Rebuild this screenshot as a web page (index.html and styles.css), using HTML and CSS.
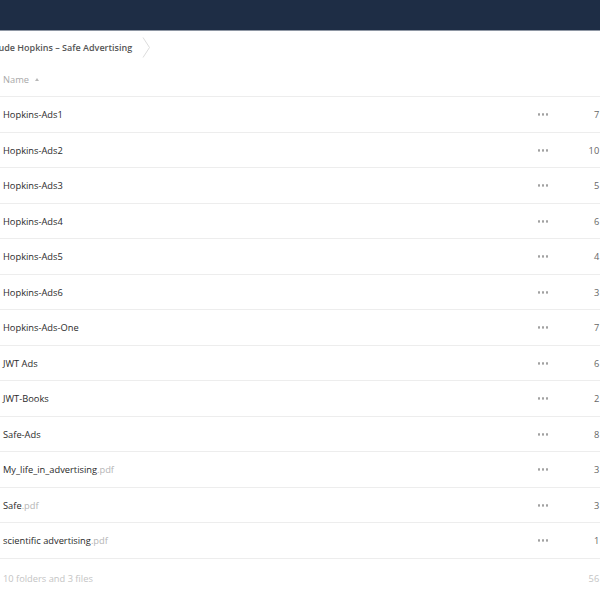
FILE: index.html
```html
<!DOCTYPE html>
<html>
<head>
<meta charset="utf-8">
<link rel="stylesheet" href="styles.css">
</head>
<body>
<header class="topbar"></header>
<div class="crumbs">
  <span class="crumb">Claude Hopkins – Safe Advertising</span>
  <svg class="chev" width="9" height="21" viewBox="0 0 9 21"><path d="M1 0.5 L7.5 10.5 L1 20.5" fill="none" stroke="#dcdcdc" stroke-width="1"/></svg>
</div>
<div class="list">
  <div class="thead"><span class="th-name">Name</span><span class="sort"></span></div>
  <div class="row"><span class="name">Hopkins-Ads1</span><span class="acts"><i></i><i></i><i></i></span><span class="size">7 MB</span></div>
  <div class="row"><span class="name">Hopkins-Ads2</span><span class="acts"><i></i><i></i><i></i></span><span class="size">10 MB</span></div>
  <div class="row"><span class="name">Hopkins-Ads3</span><span class="acts"><i></i><i></i><i></i></span><span class="size">5 MB</span></div>
  <div class="row"><span class="name">Hopkins-Ads4</span><span class="acts"><i></i><i></i><i></i></span><span class="size">6 MB</span></div>
  <div class="row"><span class="name">Hopkins-Ads5</span><span class="acts"><i></i><i></i><i></i></span><span class="size">4 MB</span></div>
  <div class="row"><span class="name">Hopkins-Ads6</span><span class="acts"><i></i><i></i><i></i></span><span class="size">3 MB</span></div>
  <div class="row"><span class="name">Hopkins-Ads-One</span><span class="acts"><i></i><i></i><i></i></span><span class="size">7 MB</span></div>
  <div class="row"><span class="name">JWT Ads</span><span class="acts"><i></i><i></i><i></i></span><span class="size">6 MB</span></div>
  <div class="row"><span class="name">JWT-Books</span><span class="acts"><i></i><i></i><i></i></span><span class="size">2 MB</span></div>
  <div class="row"><span class="name">Safe-Ads</span><span class="acts"><i></i><i></i><i></i></span><span class="size">8 MB</span></div>
  <div class="row"><span class="name">My_life_in_advertising<span class="ext">.pdf</span></span><span class="acts"><i></i><i></i><i></i></span><span class="size">3 MB</span></div>
  <div class="row"><span class="name">Safe<span class="ext">.pdf</span></span><span class="acts"><i></i><i></i><i></i></span><span class="size">3 MB</span></div>
  <div class="row"><span class="name">scientific advertising<span class="ext">.pdf</span></span><span class="acts"><i></i><i></i><i></i></span><span class="size">1 MB</span></div>
  <div class="summary"><span class="name">10 folders and 3 files</span><span class="size">56 MB</span></div>
</div>
</body>
</html>
```
FILE: styles.css
```css
html, body {
  margin: 0;
  padding: 0;
  overflow: hidden;
  background: #fff;
  font-family: "Open Sans", "Noto Sans", sans-serif;
  font-size: 9.3px;
}
.topbar {
  height: 31px;
  background: #1e2d45;
  border-bottom: 1px solid #8e96a3;
  box-sizing: border-box;
}
.crumbs {
  height: 32px;
  display: flex;
  align-items: center;
  gap: 10px;
}
.crumb {
  font-size: 9px;
  font-weight: 600;
  color: #555;
  margin-left: -15px;
  white-space: nowrap;
}
.chev { display: block; }
.list {
  width: 640px;
}
.thead {
  height: 34px;
  display: flex;
  align-items: center;
  padding-left: 3px;
  border-bottom: 1px solid #ededed;
  box-sizing: border-box;
  color: #a8a8a8;
}
.sort {
  margin-left: 6px;
  width: 0;
  height: 0;
  border-left: 2.5px solid transparent;
  border-right: 2.5px solid transparent;
  border-bottom: 3px solid #b8b8b8;
}
.row, .summary {
  height: 35.5px;
  display: flex;
  align-items: center;
  box-sizing: border-box;
  border-bottom: 1px solid #ededed;
}
.row { padding-top: 1px; }
.summary { border-bottom: none; height: 40px; color: #c4c4c4; }
.name {
  flex: 1;
  padding-left: 3px;
  color: #2a2a2a;
  white-space: nowrap;
}
.summary .name { color: #c4c4c4; }
.ext { color: #b5b5b5; }
.acts {
  display: flex;
  gap: 1.6px;
  width: 10px;
  margin-right: 18px;
}
.acts i {
  display: block;
  width: 2.6px;
  height: 2.6px;
  border-radius: 50%;
  background: #a0a0a0;
}
.size {
  width: 50px;
  text-align: right;
  padding-right: 24px;
  color: #666;
  white-space: nowrap;
}
.summary .size { color: #c4c4c4; }
```
